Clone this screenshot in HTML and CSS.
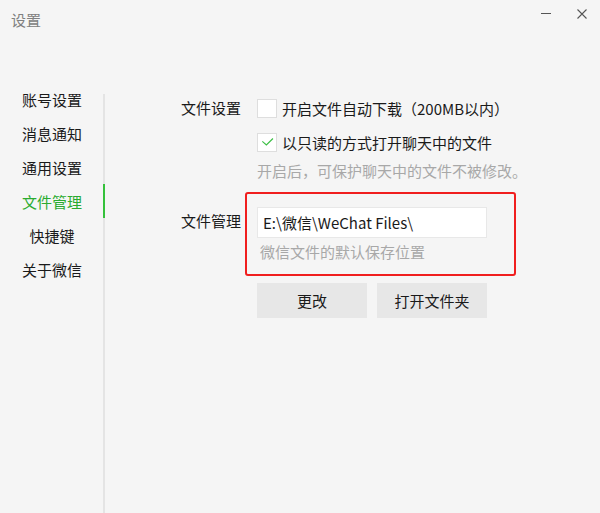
FILE: index.html
```html
<!DOCTYPE html>
<html lang="zh-CN">
<head>
<meta charset="utf-8">
<title>设置</title>
<link rel="stylesheet" href="styles.css">
</head>
<body>
<div class="window">
  <div class="titlebar">
    <div class="title">设置</div>
    <div class="controls">
      <svg class="ctl" viewBox="0 0 10 10" width="10" height="10"><line x1="0" y1="4.5" x2="10" y2="4.5" stroke="#555" stroke-width="1"/></svg>
      <svg class="ctl" viewBox="0 0 10 10" width="10" height="10"><path d="M0.5 0.5 L9.5 9.5 M9.5 0.5 L0.5 9.5" stroke="#555" stroke-width="1.1" fill="none"/></svg>
    </div>
  </div>
  <div class="body">
    <ul class="nav">
      <li class="nav-item">账号设置</li>
      <li class="nav-item">消息通知</li>
      <li class="nav-item">通用设置</li>
      <li class="nav-item active">文件管理</li>
      <li class="nav-item">快捷键</li>
      <li class="nav-item">关于微信</li>
    </ul>
    <div class="divider"><div class="indicator"></div></div>
    <div class="content">
      <div class="group group-files">
        <div class="label label-row">文件设置</div>
        <div class="options">
          <div class="check-row">
            <span class="checkbox"></span>
            <span class="check-text">开启文件自动下载（200MB以内）</span>
          </div>
          <div class="check-row">
            <span class="checkbox">
              <svg viewBox="0 0 20 20" width="19" height="19"><polyline points="4.8,8.8 9.3,12.6 16.6,5.6" fill="none" stroke="#3cbf45" stroke-width="1.3"/></svg>
            </span>
            <span class="check-text">以只读的方式打开聊天中的文件</span>
          </div>
          <div class="hint">开启后，可保护聊天中的文件不被修改。</div>
        </div>
      </div>
      <div class="group group-path">
        <div class="label label-input">文件管理</div>
        <div class="options">
          <div class="field">
            <div class="path-input">E:\微信\WeChat Files\</div>
            <div class="hint hint-path">微信文件的默认保存位置</div>
            <div class="highlight"></div>
          </div>
          <div class="buttons">
            <button class="btn">更改</button>
            <button class="btn">打开文件夹</button>
          </div>
        </div>
      </div>
    </div>
  </div>
</div>
</body>
</html>
```

FILE: styles.css
```css
* { box-sizing: border-box; }
html, body { margin: 0; padding: 0; }
body {
  background: #f5f5f5;
  font-family: "Noto Sans CJK SC", "Microsoft YaHei", sans-serif;
  color: #1a1a1a;
  font-size: 15px;
}
.window {
  width: 600px;
  height: 513px;
  display: flex;
  flex-direction: column;
  overflow: hidden;
}
.titlebar {
  height: 40px;
  display: flex;
  align-items: flex-start;
  padding-left: 11px;
  padding-right: 13px;
}
.title {
  line-height: 40px;
  color: #808080;
  font-size: 15px;
}
.controls {
  margin-left: auto;
  margin-top: 9px;
  display: flex;
  gap: 26px;
}
.ctl { display: block; }
.body {
  flex: 1;
  display: flex;
  margin-top: 43px;
}
.nav {
  list-style: none;
  margin: 0;
  padding: 0 21px 0 22px;
  width: 103px;
}
.nav-item {
  width: 60px;
  height: 34px;
  line-height: 34px;
  text-align: center;
  color: #1a1a1a;
  white-space: nowrap;
}
.nav-item.active { color: #2aab2f; }
.divider {
  width: 2px;
  margin-top: 11px;
  background: #e4e4e4;
  position: relative;
}
.indicator {
  position: absolute;
  left: 0;
  top: 90px;
  width: 2px;
  height: 34px;
  background: #35c13b;
}
.content {
  flex: 1;
  padding-left: 76px;
  padding-top: 8px;
}
.group {
  display: flex;
  gap: 16px;
}
.label {
  width: 60px;
  white-space: nowrap;
  color: #1a1a1a;
}
.label-row { line-height: 34px; }
.label-input { line-height: 28px; margin-top: 0; }
.options {
  display: flex;
  flex-direction: column;
}
.check-row {
  height: 34px;
  display: flex;
  align-items: center;
  gap: 5px;
}
.checkbox {
  width: 20px;
  height: 19px;
  background: #fff;
  border: 1px solid #dedede;
  display: flex;
  align-items: center;
  justify-content: center;
}
.checkbox svg { display: block; }
.check-text { white-space: nowrap; }
.hint {
  color: #a8a8a8;
  line-height: 24px;
  white-space: nowrap;
}
.group-path { margin-top: 24px; }
.field {
  position: relative;
}
.path-input {
  width: 230px;
  height: 31px;
  line-height: 29px;
  background: #fff;
  border: 1px solid #e8e8e8;
  padding-left: 5px;
  color: #1a1a1a;
  white-space: nowrap;
}
.hint-path {
  margin-top: 2px;
  padding-left: 3px;
}
.highlight {
  position: absolute;
  left: -12px;
  top: -15px;
  width: 271px;
  height: 84px;
  border: 2px solid #f01e1e;
  border-radius: 3px;
  pointer-events: none;
}
.buttons {
  margin-top: 19px;
  display: flex;
  gap: 10px;
}
.btn {
  width: 110px;
  height: 35px;
  border: none;
  background: #e7e7e7;
  font-family: inherit;
  font-size: 15px;
  color: #1a1a1a;
  padding: 0;
}
```
